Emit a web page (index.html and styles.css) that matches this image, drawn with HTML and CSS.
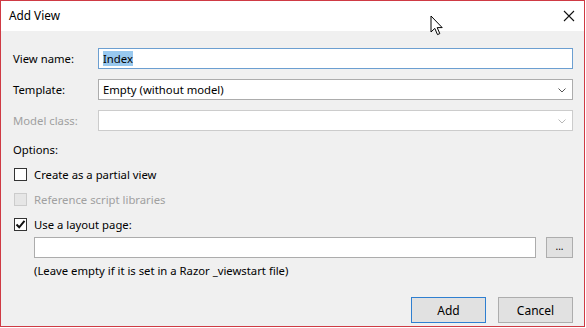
FILE: index.html
```html
<!DOCTYPE html>
<html>
<head>
<meta charset="utf-8">
<link rel="stylesheet" href="styles.css">
</head>
<body>
<div class="window">
  <div class="titlebar">
    <span class="title">Add View</span>
    <svg class="close" width="12" height="12" viewBox="0 0 12 12"><path d="M1 1L11 11M11 1L1 11" stroke="#111" stroke-width="1.1" fill="none"/></svg>
  </div>
  <div class="content">
    <div class="field-row">
      <span class="label">View name:</span>
      <div class="box focused"><span class="sel">Index</span></div>
    </div>
    <div class="field-row">
      <span class="label">Template:</span>
      <div class="box select"><span>Empty (without model)</span><svg class="chev" width="8" height="5" viewBox="0 0 8 5"><path d="M0.5 0.5L4 4L7.5 0.5" stroke="#555" fill="none"/></svg></div>
    </div>
    <div class="field-row">
      <span class="label disabled">Model class:</span>
      <div class="box select dis"><span></span><svg class="chev" width="8" height="5" viewBox="0 0 8 5"><path d="M0.5 0.5L4 4L7.5 0.5" stroke="#b8b8b8" fill="none"/></svg></div>
    </div>
    <div class="line options">Options:</div>
    <div class="line check-line"><span class="cb"></span>Create as a partial view</div>
    <div class="line check-line disabled"><span class="cb cb-dis"></span>Reference script libraries</div>
    <div class="line check-line"><span class="cb"><svg width="11" height="11" viewBox="0 0 11 11"><path d="M1.5 5.5L4.2 8.3L9.5 1.8" stroke="#111" stroke-width="2" fill="none"/></svg></span>Use a layout page:</div>
    <div class="layout-row">
      <div class="box layout-box"></div>
      <div class="btn small">...</div>
    </div>
    <div class="line hint">(Leave empty if it is set in a Razor _viewstart file)</div>
    <div class="footer">
      <div class="btn default">Add</div>
      <div class="btn">Cancel</div>
    </div>
  </div>
  <svg class="cursor" width="14" height="22" viewBox="0 0 14 22"><path d="M1 1L1 17L4.8 13.4L7.5 19.6L9.8 18.6L7.2 12.6L12.2 12.6Z" fill="#fff" stroke="#000" stroke-width="1" stroke-linejoin="round"/></svg>
</div>
</body>
</html>
```

FILE: styles.css
```css
* { box-sizing: border-box; }
html, body { margin: 0; padding: 0; background: #fff; }
body {
  font-family: "Noto Sans", "Open Sans", sans-serif;
  font-size: 11.3px;
  color: #000;
}
.window {
  position: relative;
  width: 585px;
  height: 327px;
  border: 1px solid #cf3a44;
  background: #f0f0f0;
  display: flex;
  flex-direction: column;
}
.titlebar {
  height: 30px;
  background: #fff;
  display: flex;
  align-items: center;
  justify-content: space-between;
  padding: 0 9px 2px 8px;
}
.title { font-size: 11.8px; }
.close { margin-top: 2px; }
.content {
  padding: 17px 11px 0 12px;
  display: flex;
  flex-direction: column;
}
.field-row {
  display: flex;
  align-items: center;
  height: 21px;
  margin-bottom: 10px;
}
.field-row .label { width: 85px; flex: none; }
.disabled { color: #a0a0a0; }
.box {
  flex: 1;
  height: 21px;
  background: #fff;
  border: 1px solid #acacac;
  display: flex;
  align-items: center;
  padding-left: 4px;
}
.box.focused { border-color: #6c9fd1; }
.box.dis { border-color: #cccccc; }
.sel { background: #99c9ef; line-height: 15px; }
.select { justify-content: space-between; padding-right: 6px; }
.chev { margin-top: 1px; }
.line {
  height: 25px;
  display: flex;
  align-items: center;
}
.options { margin-top: -4px; }
.check-line { padding-left: 1px; }
.cb {
  width: 13px;
  height: 13px;
  border: 1px solid #333;
  background: #fff;
  margin-right: 7px;
  display: flex;
  align-items: center;
  justify-content: center;
  flex: none;
}
.cb svg { display: block; }
.cb-dis { border-color: #cccccc; background: #e6e6e6; }
.layout-row {
  display: flex;
  align-items: center;
  padding-left: 21px;
  height: 21px;
}
.layout-box { flex: 1; }
.btn {
  background: #e1e1e1;
  border: 1px solid #adadad;
  display: flex;
  align-items: center;
  justify-content: center;
}
.btn.small {
  width: 27px;
  height: 21px;
  margin-left: 10px;
  font-size: 10px;
  padding-bottom: 3px;
}
.hint { padding-left: 21px; }
.footer {
  display: flex;
  justify-content: flex-end;
  gap: 12px;
  margin-top: 14px;
}
.footer .btn { width: 75px; height: 26px; font-size: 12px; }
.btn.default { border-color: #2f7fd0; }
.cursor { position: absolute; left: 429px; top: 14px; }
```
